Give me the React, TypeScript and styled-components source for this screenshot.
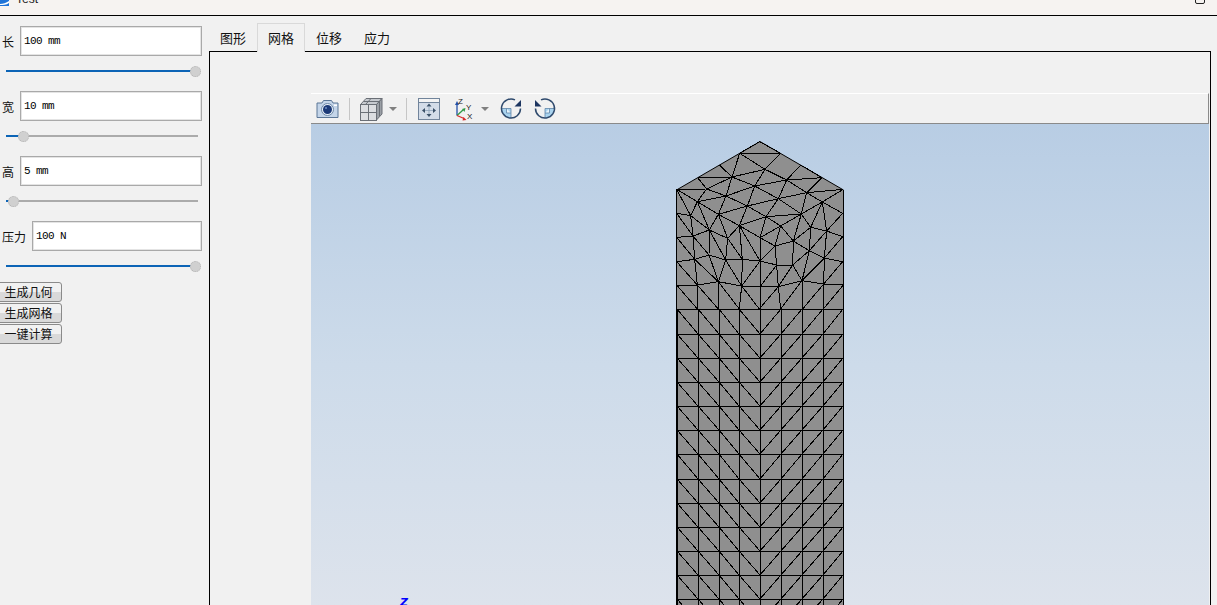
import { createGlobalStyle, styled } from "styled-components"

const cjk = `"Noto Sans CJK SC", "Noto Sans", sans-serif`

const GlobalStyle = createGlobalStyle`
  html, body {
    margin: 0;
    height: 100%;
    overflow: hidden;
    background: #f1f1f1;
  }
  #root {
    height: 100%;
  }
`

const Window = styled.div`
  display: flex;
  flex-direction: column;
  height: 100vh;
  overflow: hidden;
  font-family: ${cjk};
  color: #111;
`

const TitleBar = styled.header`
  flex: none;
  display: flex;
  justify-content: space-between;
  height: 15px;
  overflow: hidden;
  background: #f6f3f1;
  border-bottom: 1px solid #000;
`

const TitleLeft = styled.div`
  display: flex;
  gap: 6px;
  margin-top: -7px;
`

const TitleText = styled.span`
  font: 12px/12px "Liberation Sans", sans-serif;
  color: #222;
`

const MaxBox = styled.div`
  width: 8px;
  height: 8px;
  margin: -6px 12px 0 0;
  border: 1px solid #222;
  border-radius: 2px;
`

const Main = styled.main`
  flex: 1;
  min-height: 0;
  display: flex;
`

const Side = styled.aside`
  flex: none;
  width: 209px;
  display: flex;
  flex-direction: column;
  gap: 5px;
  padding-top: 10px;
  box-sizing: border-box;
`

const Field = styled.div`
  display: flex;
  flex-direction: column;
`

const FieldRow = styled.label`
  display: flex;
  align-items: center;
  gap: 6px;
  height: 30px;
  padding: 0 7px 0 2px;
  font-size: 12px;
`

const ValueInput = styled.input`
  flex: 1;
  min-width: 0;
  height: 30px;
  box-sizing: border-box;
  padding: 0 3px;
  border: 1px solid #a9a9a9;
  outline: 1px solid #e4e4e4;
  outline-offset: -2px;
  border-radius: 0;
  background: #fff;
  color: #000;
  font: 11px "Liberation Mono", monospace;
  letter-spacing: -0.6px;
`

const SliderBox = styled.div`
  position: relative;
  height: 30px;
  margin: 0 11px 0 6px;
`

const Track = styled.div`
  position: absolute;
  top: 14px;
  left: 0;
  right: 0;
  height: 2px;
  background: #ababab;
`

const TrackFill = styled.div`
  position: absolute;
  top: 14px;
  left: 0;
  height: 2px;
  background: #0c64b6;
`

const Thumb = styled.div`
  position: absolute;
  top: 10px;
  width: 11px;
  height: 11px;
  margin-left: -5px;
  border-radius: 50%;
  box-sizing: border-box;
  background: #d0d0d0;
  border: 1px dotted #b4b4b4;
`

const ActionList = styled.div`
  display: flex;
  flex-direction: column;
  gap: 1px;
  margin-top: -4px;
`

const ActionButton = styled.button`
  width: 67px;
  height: 20px;
  margin-left: -5px;
  padding: 0;
  box-sizing: border-box;
  border: 1px solid #8a8a8a;
  border-radius: 3px;
  background: linear-gradient(#f1f1f1 0 50%, #d9d9d9 50% 100%);
  color: #111;
  font: 12px/18px ${cjk};
`

const TabArea = styled.section`
  flex: 1;
  min-width: 0;
  display: flex;
  flex-direction: column;
  margin-bottom: -2px;
  padding: 7px 6px 0 0;
`

const TabBar = styled.nav`
  flex: none;
  display: flex;
  height: 28px;
`

const Tab = styled.div<{ $active?: boolean }>`
  position: relative;
  z-index: 1;
  width: 48px;
  height: 29px;
  box-sizing: border-box;
  display: flex;
  align-items: center;
  justify-content: center;
  padding-bottom: 2px;
  font-size: 13px;
  border: 1px solid ${props => props.$active ? "#d9d9d9" : "transparent"};
  border-bottom: none;
  background: ${props => props.$active ? "#f1f1f1" : "transparent"};
`

const Pane = styled.div`
  flex: 1;
  min-height: 0;
  display: flex;
  flex-direction: column;
  border: 1px solid #000;
  padding: 41px 1px 0 101px;
`

const Toolbar = styled.div`
  flex: none;
  display: flex;
  align-items: center;
  gap: 9px;
  height: 31px;
  box-sizing: border-box;
  padding-left: 5px;
  background: #f1f1f1;
  border-top: 1px solid #fff;
  border-right: 1px solid #8a8a8a;
  border-bottom: 1px solid #8a8a8a;
`

const ToolGroup = styled.div`
  display: flex;
  align-items: center;
  gap: 6px;
`

const ToolSep = styled.div`
  width: 1px;
  height: 22px;
  background: #c6c6c6;
`

const ToolIcon = styled.svg`
  flex: none;
  display: block;
`

const DropCaret = styled.div`
  width: 0;
  height: 0;
  border-left: 4px solid transparent;
  border-right: 4px solid transparent;
  border-top: 4px solid #808080;
`

const Canvas = styled.div`
  position: relative;
  flex: 1;
  min-height: 0;
  display: flex;
  justify-content: center;
  align-items: flex-start;
  padding-top: 16px;
  overflow: hidden;
  background: linear-gradient(#b8cde4, #cddbea 50%, #dde3ec);
`

const Mesh = styled.svg`
  flex: none;
  display: block;
`

const AxisLabel = styled.span`
  position: absolute;
  left: 89px;
  top: 472px;
  font: italic bold 11px/13px "DejaVu Sans", sans-serif;
  color: #0000ff;
`

const fields = [
  { label: "长", value: "100 mm", thumb: 189 },
  { label: "宽", value: "10 mm", thumb: 17 },
  { label: "高", value: "5 mm", thumb: 7 },
  { label: "压力", value: "100 N", thumb: 189 },
]

const actions = ["生成几何", "生成网格", "一键计算"]
const tabs = ["图形", "网格", "位移", "应力"]

// traced from the top of the part, in 3x crop coordinates
const capEdges = `299,35 239,70|299,35 362,70|239,70 362,70|239,70 216,141|239,70 315,118|362,70 315,118|422,105 380,150
315,118 380,150|315,118 216,141|315,118 284,168|216,141 178,105|113,143 216,141|113,143 140,177|216,141 140,177
216,141 284,168|216,141 198,198|284,168 380,150|380,150 486,143|486,143 440,188|380,150 440,188|440,188 550,178
380,150 355,206|284,168 355,206|284,168 198,198|284,168 262,228|198,198 262,228|262,228 355,206|355,206 440,188
440,188 487,216|440,188 424,252|487,216 550,178|487,216 424,252|355,206 424,252|355,206 318,260|262,228 318,260
318,260 424,252|262,228 175,253|262,228 238,287|238,287 318,260|198,198 175,253|198,198 112,215|140,177 198,198
140,177 112,215|50,178 140,177|50,178 112,215|50,178 92,257|112,215 92,257|112,215 148,300|112,215 175,253
175,253 148,300|175,253 238,287|175,253 203,325|238,287 203,325|148,300 203,325|148,300 99,318|92,257 148,300
92,257 99,318|92,257 50,250|50,250 99,318|50,322 99,318|99,318 104,388|50,322 104,388|99,318 147,375|148,300 147,375
147,375 104,388|147,375 197,390|203,325 197,390|148,300 197,390|203,325 247,388|238,287 247,388|238,287 300,323
300,323 318,260|300,323 362,288|318,260 362,288|362,288 424,252|424,252 400,333|424,252 452,292|487,216 452,292
487,216 500,303|487,216 548,250|500,303 548,250|500,303 548,320|452,292 500,303|452,292 400,333|362,288 400,333
362,288 345,348|300,323 345,348|345,348 400,333|400,333 448,362|452,292 448,362|448,362 500,303|448,362 493,384
500,303 493,384|493,384 548,320|493,384 548,395|400,333 398,405|345,348 350,405|345,348 300,393|398,405 350,405
398,405 448,362|350,405 300,393|300,323 300,393|238,287 300,393|247,388 300,393|247,388 197,390|197,390 175,455
197,390 245,468|247,388 245,468|104,388 50,395|104,388 112,465|50,395 112,465|104,388 175,455|147,375 175,455
112,465 175,455|175,455 245,468|175,455 175,537|245,468 300,470|300,393 300,537|300,393 245,468|350,405 300,470
350,405 355,470|398,405 355,470|398,405 426,452|448,362 426,452|493,384 426,452|493,384 491,462|548,395 491,462
426,452 355,470|426,452 491,462|491,462 550,465|300,470 355,470|50,465 112,465|50,465 112,537|112,465 112,537
112,465 175,537|175,455 238,537|245,468 238,537|245,468 298,537|355,470 298,537|355,470 362,537|426,452 362,537
426,452 428,537|491,462 428,537|491,462 490,537|550,465 490,537|178,105 216,141|422,105 486,143`

const capLines = capEdges.split(/[|\n]/).map(edge => {
  const [a, b] = edge.trim().split(" ").map(p => p.split(",").map(Number))
  return [660 + a[0] / 3, 130 + a[1] / 3, 660 + b[0] / 3, 130 + b[1] / 3]
})

const columns = [677, 698, 719, 739, 760, 781, 802, 823, 843]
const rows = [309, 334, 358, 382, 406, 430, 454, 479, 503, 527, 551, 575, 599, 623]

const bodyLines: number[][] = []
rows.forEach((y, r) => {
  bodyLines.push([677, y, 843, y])
  if (r === rows.length - 1) return
  columns.slice(0, -1).forEach((x, c) => {
    const next = columns[c + 1]
    if (c < 4) bodyLines.push([x, y, next, rows[r + 1]])
    else bodyLines.push([next, y, x, rows[r + 1]])
  })
})
columns.forEach(x => bodyLines.push([x, 309, x, 623]))

const CameraIcon = () => (
  <ToolIcon width="24" height="24" viewBox="0 0 24 24">
    <path d="M1 6h5l1.500-2.500h8l1.500 2.500h5v14.500h-21z" fill="#c4d5e9" stroke="#5b7696" strokeLinejoin="round" />
    <circle cx="11.500" cy="12.500" r="6" fill="#eaf1f8" stroke="#6e88a6" />
    <circle cx="11.500" cy="12.500" r="4.500" fill="#1c3a78" />
    <circle cx="10" cy="11" r="1" fill="#6f8fc4" />
    <rect x="18" y="7.500" width="3" height="1.500" fill="#fff" />
  </ToolIcon>
)

const CubeIcon = () => (
  <ToolIcon width="24" height="24" viewBox="0 0 24 24">
    <path d="M1.500 7.500 7 1.500h16l-5.500 6z" fill="#c6cacf" stroke="#6a6f76" />
    <path d="M17.500 7.500 23 1.500v15.500l-5.500 6z" fill="#9ba0a6" stroke="#6a6f76" />
    <rect x="1.500" y="7.500" width="16" height="16" fill="#dcdee1" stroke="#6a6f76" />
    <path d="M9.500 7.500v16M1.500 15.500h16M12 1.500 6.500 7.500M4.500 4.500h16M20.500 4v15" fill="none" stroke="#6a6f76" />
  </ToolIcon>
)

const FitIcon = () => (
  <ToolIcon width="24" height="24" viewBox="0 0 24 24">
    <rect x="2.500" y="1.500" width="21" height="21" fill="#d3dce8" stroke="#71849b" />
    <rect x="3" y="2" width="20" height="3" fill="#f4f4f4" />
    <path d="M2.500 5.500h21" stroke="#71849b" />
    <path d="M13 6.500l2.500 3h-5zM13 20l2.500-3h-5zM6 13.500l3-2.500v5zM20 13.500l-3-2.500v5z" fill="#3a5068" />
    <path d="M13 9v8M9 13.500h8" stroke="#8ea2b8" strokeWidth=".8" />
  </ToolIcon>
)

const AxesIcon = () => (
  <ToolIcon width="26" height="24" viewBox="0 0 26 24">
    <path d="M8 18.500V7" stroke="#2450a8" strokeWidth="1.300" />
    <path d="M8 4 10 8H6z" fill="#2450a8" />
    <path d="M8 18.500l6-5.500" stroke="#2e9a46" strokeWidth="1.300" />
    <path d="M16.500 11l-1 4-2.500-3z" fill="#2e9a46" />
    <path d="M8 18.500l7 3" stroke="#d62a2a" strokeWidth="1.300" />
    <path d="M17.500 23l-4 .500 1-3.500z" fill="#d62a2a" />
    <text x="9" y="6.500" fontFamily="Liberation Sans" fontSize="8" fill="#222">Z</text>
    <text x="17" y="13" fontFamily="Liberation Sans" fontSize="8" fill="#222">Y</text>
    <text x="18" y="22" fontFamily="Liberation Sans" fontSize="8" fill="#222">X</text>
  </ToolIcon>
)

const RotateRightIcon = () => (
  <ToolIcon width="26" height="24" viewBox="0 0 26 24">
    <path d="M3.500 11.500H13V21a9.500 9.500 0 0 1-9.500-9.500z" fill="#a9d3ee" />
    <path d="M8.500 11.500V16H13z" fill="#e8f4fb" />
    <path d="M3.500 11.500H13V21M8.500 11.500V16H13" fill="none" stroke="#5f87aa" strokeWidth=".8" />
    <path d="M17 2.900A9.500 9.500 0 1 0 22.500 11.500" fill="none" stroke="#2f4a6d" strokeWidth="1.500" />
    <path d="M23 3v6.500h-6.500z" fill="#1d3560" />
  </ToolIcon>
)

const RotateLeftIcon = () => (
  <ToolIcon width="24" height="24" viewBox="0 0 24 24">
    <path d="M21.500 11.500H12V21a9.500 9.500 0 0 0 9.500-9.500z" fill="#a9d3ee" />
    <path d="M16.500 11.500V16H12z" fill="#e8f4fb" />
    <path d="M21.500 11.500H12V21M16.500 11.500V16H12" fill="none" stroke="#5f87aa" strokeWidth=".8" />
    <path d="M8 2.900A9.500 9.500 0 1 1 2.500 11.500" fill="none" stroke="#2f4a6d" strokeWidth="1.500" />
    <path d="M2 3v6.500h6.500z" fill="#1d3560" />
  </ToolIcon>
)

const AppIcon = () => (
  <ToolIcon width="10" height="14" viewBox="0 0 10 14">
    <rect x="0" y="0" width="9" height="13" fill="#1f74d8" />
    <path d="M0 11c3 0 6-1 9-3v2c-3 2-6 2-9 2z" fill="#fff" />
  </ToolIcon>
)

const App = () => {
  return (
    <Window>
      <GlobalStyle />
      <TitleBar>
        <TitleLeft>
          <AppIcon />
          <TitleText>Test</TitleText>
        </TitleLeft>
        <MaxBox />
      </TitleBar>
      <Main>
        <Side>
          {fields.map(field => (
            <Field key={field.label}>
              <FieldRow>
                {field.label}
                <ValueInput readOnly value={field.value} />
              </FieldRow>
              <SliderBox>
                <Track />
                <TrackFill style={{ width: field.thumb }} />
                <Thumb style={{ left: field.thumb }} />
              </SliderBox>
            </Field>
          ))}
          <ActionList>
            {actions.map(action => <ActionButton key={action}>{action}</ActionButton>)}
          </ActionList>
        </Side>
        <TabArea>
          <TabBar>
            {tabs.map(tab => <Tab key={tab} $active={tab === "网格"}>{tab}</Tab>)}
          </TabBar>
          <Pane>
            <Toolbar>
              <CameraIcon />
              <ToolSep />
              <ToolGroup>
                <CubeIcon />
                <DropCaret />
              </ToolGroup>
              <ToolSep />
              <FitIcon />
              <ToolGroup>
                <AxesIcon />
                <DropCaret />
              </ToolGroup>
              <RotateRightIcon />
              <RotateLeftIcon />
            </Toolbar>
            <Canvas>
              <Mesh width="170" height="490" viewBox="675 140 170 490">
                <path d="M760 141.500 843.500 190V630H676.500V190z" fill="#8f8f8f" stroke="#000" />
                {[...capLines, ...bodyLines].map((l, i) => (
                  <line key={i} x1={l[0]} y1={l[1]} x2={l[2]} y2={l[3]} stroke="#000" strokeWidth="1" shapeRendering="crispEdges" />
                ))}
              </Mesh>
              <AxisLabel>Z</AxisLabel>
            </Canvas>
          </Pane>
        </TabArea>
      </Main>
    </Window>
  )
}

export default App
